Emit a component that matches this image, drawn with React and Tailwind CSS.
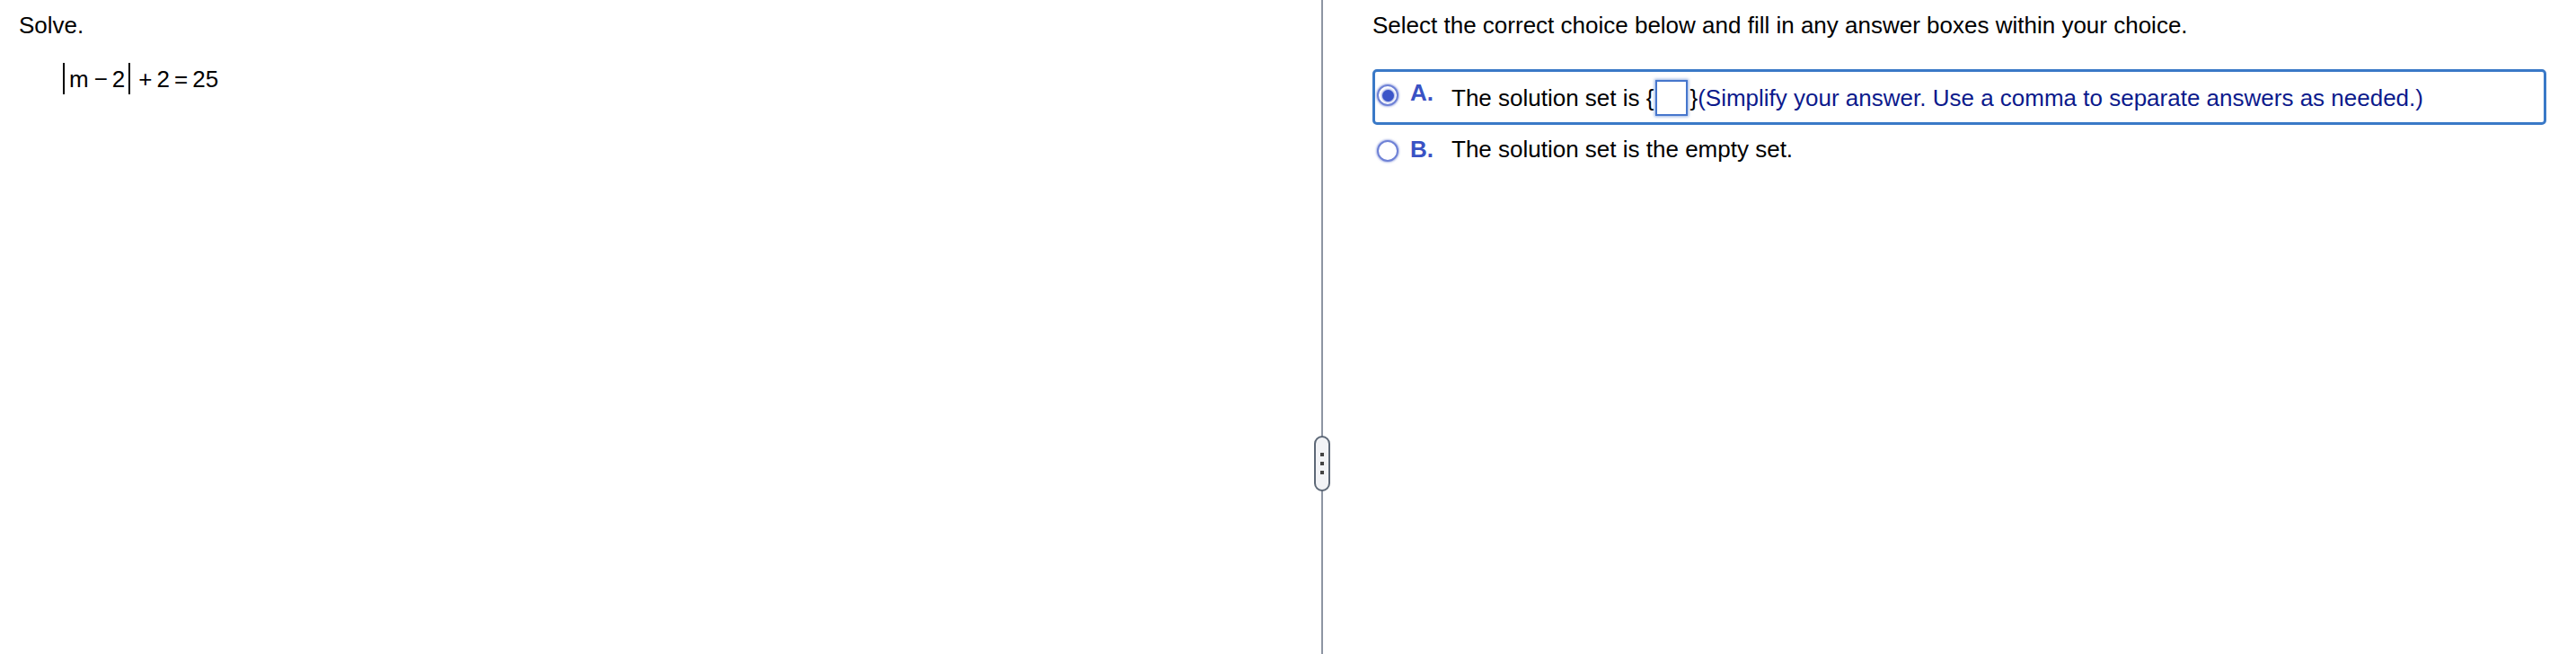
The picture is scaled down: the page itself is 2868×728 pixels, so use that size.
import React from "react";

const F = { fontFamily: '"Liberation Sans", Arial, Helvetica, sans-serif' };

function Radio({ selected }) {
  return (
    <span className="relative mt-[5px] flex h-[24px] w-[24px] shrink-0 items-center justify-center rounded-full border-[2px] border-[#6f82d6] bg-white shadow-[0_0_2px_1px_rgba(111,130,214,0.55)]">
      {selected && <span className="h-[13px] w-[13px] rounded-full bg-[#3b55c8] shadow-[0_0_2px_1px_rgba(59,85,200,0.5)]" />}
    </span>
  );
}

export default function App() {
  return (
    <div className="flex h-[728px] w-full overflow-hidden bg-white text-black" style={F}>
      {/* Left panel */}
      <div className="w-[1471px] shrink-0 pl-[21px] pt-[13px]">
        <div className="text-[26px] leading-[30px]">Solve.</div>
        <div className="mt-[27px] flex items-center pl-[49px] text-[26px] leading-[30px]">
          <span className="h-[35px] w-[2px] bg-black" />
          <span className="ml-[5px]">m</span>
          <span className="ml-[6px]">−</span>
          <span className="ml-[5px]">2</span>
          <span className="ml-[4px] h-[35px] w-[2px] bg-black" />
          <span className="ml-[9px]">+</span>
          <span className="ml-[5px]">2</span>
          <span className="ml-[5px]">=</span>
          <span className="ml-[5px]">25</span>
        </div>
      </div>

      {/* Divider */}
      <div className="relative w-[2px] shrink-0 bg-[#8d95a3]">
        <div className="absolute left-[-8px] top-[485px] flex h-[62px] w-[18px] flex-col items-center justify-center gap-[6px] rounded-full border-[2px] border-[#5d6877] bg-[#f2f3f6]">
          <span className="h-[4px] w-[4px] bg-[#444]" />
          <span className="h-[4px] w-[4px] bg-[#444]" />
          <span className="h-[4px] w-[4px] bg-[#444]" />
        </div>
      </div>

      {/* Right panel */}
      <div className="min-w-0 flex-1 pl-[55px] pr-[33px] pt-[13px]">
        <div className="text-[26px] leading-[30px]">
          Select the correct choice below and fill in any answer boxes within your choice.
        </div>

        <div className="mt-[34px] flex items-start rounded-[5px] border-[3px] border-[#3a79c7] pb-[7px] pl-[2px] pt-[9px]">
          <Radio selected />
          <span className="ml-[13px] w-[46px] shrink-0 text-[26px] font-bold leading-[30px] text-[#3a52c4] -mt-[1px]">A.</span>
          <div className="flex h-[40px] items-center text-[26px] leading-[30px]">
            <span className="whitespace-pre">The solution set is {"{"}</span>
            <span className="mx-[2px] h-[40px] w-[36px] border-[2px] border-[#4676cc] bg-white shadow-[0_0_3px_1px_rgba(70,118,204,0.55)]" />
            <span>{"}"}</span>
            <span className="text-[#0c1a8c]">(Simplify your answer. Use a comma to separate answers as needed.)</span>
          </div>
        </div>

        <div className="mt-[1px] flex items-start border-[3px] border-transparent pl-[2px] pt-[8px]">
          <Radio />
          <span className="ml-[13px] w-[46px] shrink-0 text-[26px] font-bold leading-[30px] text-[#3a52c4]">B.</span>
          <span className="text-[26px] leading-[30px]">The solution set is the empty set.</span>
        </div>
      </div>
    </div>
  );
}
